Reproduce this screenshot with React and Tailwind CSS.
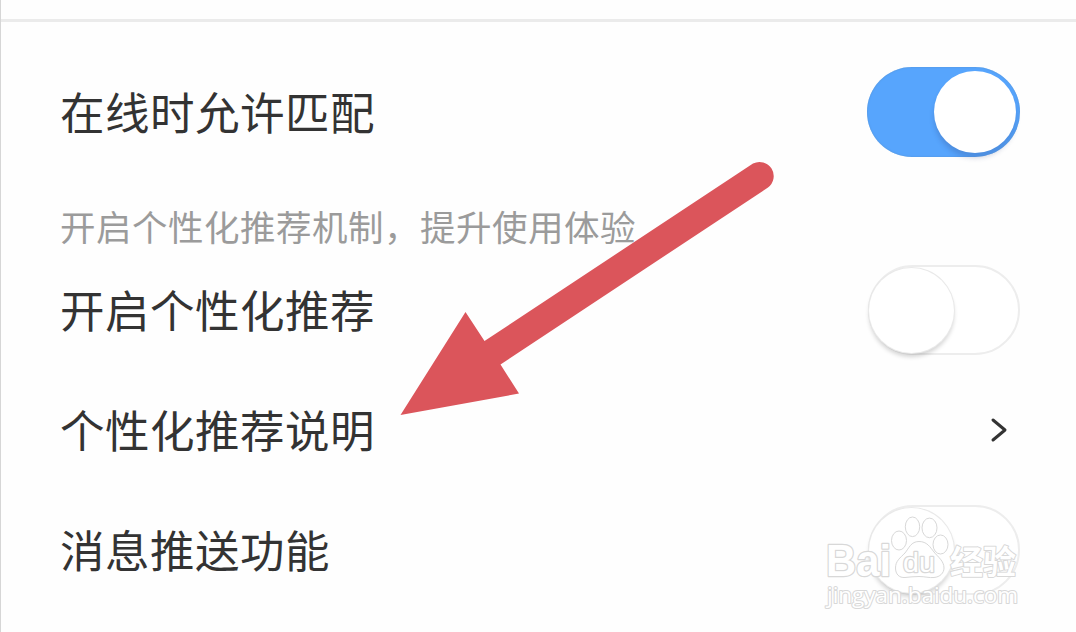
import { useState } from 'react'
import clsx from 'clsx'

function Toggle({ checked, onChange, label }) {
  return (
    <button
      role="switch"
      aria-checked={checked}
      aria-label={label}
      onClick={() => onChange(!checked)}
      className={clsx(
        'flex shrink-0 items-center rounded-full',
        checked
          ? 'h-[90px] w-[153px] justify-end bg-[#57a5fd] pr-1 shadow-[inset_0_0_2px_#5590d0]'
          : 'h-[90px] w-[152px] justify-start border-2 border-[#ededed] bg-white'
      )}
    >
      <span
        className={clsx(
          'rounded-full bg-white',
          checked
            ? 'mb-[1px] size-[82px] shadow-[0_5px_5px_rgba(40,60,120,0.22)]'
            : '-ml-[1px] size-[85px] shadow-[0_0_0_1px_#e9e9e9,0_4px_4px_rgba(0,0,0,0.17)]'
        )}
      />
    </button>
  )
}

function Row({ title, children }) {
  return (
    <div className="flex h-[120px] items-center justify-between">
      <span className="pb-[2px] text-[44.500px] leading-[60px] tracking-[0.500px]">{title}</span>
      {children}
    </div>
  )
}

function Chevron() {
  return (
    <svg viewBox="0 0 24 32" className="mr-[9px] h-8 w-6" fill="none">
      <path
        d="M6 6L18 16L6 26"
        stroke="#333"
        strokeWidth="3"
        strokeLinecap="round"
        strokeLinejoin="round"
      />
    </svg>
  )
}

function Arrow() {
  return (
    <svg
      viewBox="0 0 376 256"
      className="pointer-events-none absolute top-[160px] left-[399px] h-[256px] w-[376px]"
    >
      <path
        d="M0.500 255L65.500 152L84.500 181L353 3.500A14.200 14.200 0 0 1 368 27.500L100.500 204.500L119 233.500Z"
        fill="#db555b"
      />
    </svg>
  )
}

function Watermark() {
  return (
    <svg
      viewBox="0 0 200 100"
      className="pointer-events-none absolute top-[510px] left-[821px] h-[100px] w-[200px]"
      fill="white"
      stroke="#d8d8d8"
      strokeWidth="1"
      strokeLinejoin="round"
    >
      <g fillOpacity="0.8">
        <ellipse cx="77" cy="30.500" rx="7.500" ry="9.500" />
        <ellipse cx="90.500" cy="16.800" rx="7.200" ry="9.800" />
        <ellipse cx="107.500" cy="17.900" rx="7.500" ry="9.800" />
        <ellipse cx="118.500" cy="34.500" rx="7.500" ry="9.500" />
        <path d="M97 31.500C89 31.500 87 38 83 43C78 48 73.500 51 73.500 58C73.500 64 77 68 83 67.500C88 67 92 66.500 97 66.500C103 66.500 107 68 112 67.500C118 67 122 63 122 58C122 51 116 47 112 42C108 37 105 31.500 97 31.500Z" />
      </g>
      <text
        x="4"
        y="66"
        textLength="65"
        lengthAdjust="spacingAndGlyphs"
        strokeWidth="2.500"
        className="font-['Liberation_Sans',sans-serif] text-[44px] font-bold [paint-order:stroke]"
      >
        Bai
      </text>
      <text
        x="81"
        y="62"
        textLength="32"
        lengthAdjust="spacingAndGlyphs"
        strokeWidth="2.500"
        className="font-['Liberation_Sans',sans-serif] text-[28px] [paint-order:stroke]"
      >
        du
      </text>
      <text
        x="128"
        y="64"
        textLength="66"
        lengthAdjust="spacingAndGlyphs"
        strokeWidth="2"
        className="font-['Noto_Sans_CJK_SC',sans-serif] text-[33px] font-bold [paint-order:stroke]"
      >
        经验
      </text>
      <text
        x="5"
        y="93"
        textLength="191"
        lengthAdjust="spacingAndGlyphs"
        strokeWidth="2"
        className="font-['Open_Sans',sans-serif] text-[21px] [paint-order:stroke]"
      >
        jingyan.baidu.com
      </text>
    </svg>
  )
}

function App() {
  const [matching, setMatching] = useState(true)
  const [recommend, setRecommend] = useState(false)
  const [push, setPush] = useState(false)

  return (
    <div className="relative h-[632px] w-[1076px] overflow-hidden border-l border-[#d6d6d6] bg-[#fefefe] font-['Noto_Sans_CJK_SC',sans-serif] text-[#333]">
      <div className="h-[22px] border-b-[3px] border-[#ebebeb]" />

      <div className="flex flex-col pt-[30px] pr-14 pl-[59px]">
        <Row title="在线时允许匹配">
          <Toggle checked={matching} onChange={setMatching} label="在线时允许匹配" />
        </Row>

        <p className="mt-[27px] mb-[3px] h-12 text-[35.500px] leading-[54px] tracking-[0.500px] whitespace-nowrap text-[#9b9b9b]">
          开启个性化推荐机制，提升使用体验
        </p>

        <Row title="开启个性化推荐">
          <Toggle checked={recommend} onChange={setRecommend} label="开启个性化推荐" />
        </Row>
        <Row title="个性化推荐说明">
          <Chevron />
        </Row>
        <Row title="消息推送功能">
          <Toggle checked={push} onChange={setPush} label="消息推送功能" />
        </Row>
      </div>

      <Arrow />
      <Watermark />
    </div>
  )
}

export default App
